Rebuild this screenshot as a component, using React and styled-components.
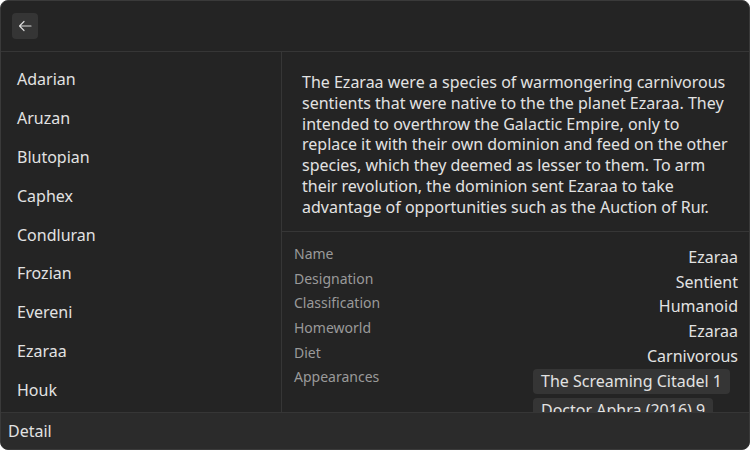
import React from "react";
import styled, { createGlobalStyle } from "styled-components";

const Global = createGlobalStyle`
  html, body { margin: 0; padding: 0; background: #ffffff; }
  body { font-family: "Noto Sans", "DejaVu Sans", sans-serif; }
  * { box-sizing: border-box; }
`;

const Window = styled.div`
  width: 750px;
  height: 450px;
  background: #242424;
  border: 1px solid #3a3a3a;
  border-radius: 8px;
  overflow: hidden;
  display: flex;
  flex-direction: column;
  color: #e2e2e2;
`;

const Header = styled.div`
  height: 51px;
  flex: none;
  display: flex;
  align-items: center;
  padding-left: 11px;
  border-bottom: 1px solid #363636;
`;

const BackButton = styled.button`
  width: 26px;
  height: 26px;
  border: none;
  border-radius: 4px;
  background: #353535;
  color: #d8d8d8;
  display: flex;
  align-items: center;
  justify-content: center;
  padding: 0;
`;

const Body = styled.div`
  flex: 1;
  min-height: 0;
  display: flex;
`;

const Sidebar = styled.ul`
  width: 281px;
  flex: none;
  margin: 0;
  padding: 7.5px 0 0;
  list-style: none;
  border-right: 1px solid #363636;
  overflow: hidden;
`;

const Item = styled.li`
  height: 38.9px;
  display: flex;
  align-items: center;
  padding-left: 16px;
  font-size: 16px;
  color: #e2e2e2;
`;

const Content = styled.div`
  flex: 1;
  min-width: 0;
  overflow: hidden;
`;

const Description = styled.p`
  margin: 0;
  padding: 20px 19px 13px 20px;
  font-size: 16px;
  line-height: 20.83px;
  color: #e2e2e2;
  border-bottom: 1px solid #363636;
`;

const Props = styled.div`
  display: grid;
  grid-template-columns: 1fr auto;
  padding: 13px 11px 0 12px;
`;

const Label = styled.div`
  font-size: 14px;
  line-height: 18px;
  color: #9a9a9a;
`;

const Value = styled.div`
  font-size: 16px;
  line-height: 24.7px;
  text-align: right;
  color: #e2e2e2;
`;

const Tags = styled.div`
  display: flex;
  flex-direction: column;
  align-items: flex-start;
  gap: 4px;
  padding-top: 1px;
  margin-right: 8px;
`;

const Tag = styled.span`
  background: #353535;
  border-radius: 4px;
  padding: 0 8px;
  height: 25px;
  line-height: 25px;
  font-size: 16px;
  color: #e2e2e2;
  white-space: nowrap;
`;

const Footer = styled.div`
  height: 37px;
  flex: none;
  background: #2b2b2b;
  border-top: 1px solid #363636;
  display: flex;
  align-items: center;
  padding-left: 7px;
  font-size: 16px;
  color: #e2e2e2;
`;

const species = [
  "Adarian", "Aruzan", "Blutopian", "Caphex", "Condluran",
  "Frozian", "Evereni", "Ezaraa", "Houk", "Kallusian",
];

const props = [
  ["Name", "Ezaraa"],
  ["Designation", "Sentient"],
  ["Classification", "Humanoid"],
  ["Homeworld", "Ezaraa"],
  ["Diet", "Carnivorous"],
];

const appearances = ["The Screaming Citadel 1", "Doctor Aphra (2016) 9"];

export default function App() {
  return (
    <>
      <Global />
      <Window>
        <Header>
          <BackButton aria-label="Back">
            <svg width="16" height="16" viewBox="0 0 16 16" fill="none" stroke="currentColor" strokeWidth="1.2" strokeLinecap="round" strokeLinejoin="round">
              <path d="M14 8H2.5M7 3.5 2.5 8 7 12.5" />
            </svg>
          </BackButton>
        </Header>
        <Body>
          <Sidebar>
            {species.map(s => <Item key={s}>{s}</Item>)}
          </Sidebar>
          <Content>
            <Description>
              The Ezaraa were a species of warmongering carnivorous sentients that were native to the the planet Ezaraa. They intended to overthrow the Galactic Empire, only to replace it with their own dominion and feed on the other species, which they deemed as lesser to them. To arm their revolution, the dominion sent Ezaraa to take advantage of opportunities such as the Auction of Rur.
            </Description>
            <Props>
              {props.map(([k, v]) => (
                <React.Fragment key={k}>
                  <Label>{k}</Label>
                  <Value>{v}</Value>
                </React.Fragment>
              ))}
              <Label>Appearances</Label>
              <Tags>
                {appearances.map(a => <Tag key={a}>{a}</Tag>)}
              </Tags>
            </Props>
          </Content>
        </Body>
        <Footer>Detail</Footer>
      </Window>
    </>
  );
}
